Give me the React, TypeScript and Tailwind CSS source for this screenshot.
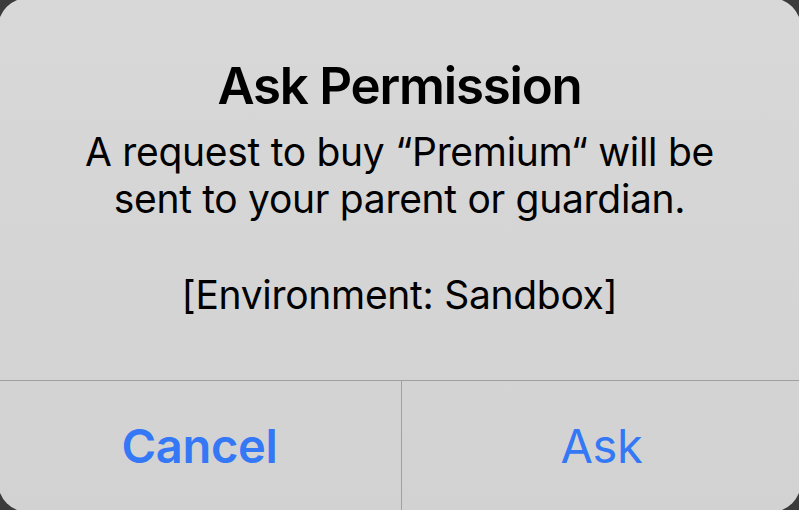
export default function App() {
  return (
    <div className="w-[799px] h-[510px] overflow-hidden bg-[#3b3b3b]" style={{ fontFamily: 'Inter, "Noto Sans", sans-serif' }}>
      <div className="-m-[2px] w-[803px] h-[514px] rounded-[30px] bg-gradient-to-b from-[#d8d8d8] to-[#d2d2d2] flex flex-col overflow-hidden">
        <div className="h-[382px] flex flex-col items-center pt-[60px] text-black">
          <div className="text-[51px] leading-[56px] font-semibold tracking-[-1.2px]">Ask Permission</div>
          <div className="mt-[14px] text-[39px] leading-[47px] text-center tracking-[-0.3px]">
            <div>A request to buy “Premium“ will be</div>
            <div>sent to your parent or guardian.</div>
            <div className="mt-[49px]">[Environment: Sandbox]</div>
          </div>
        </div>
        <div className="flex-1 flex border-t border-[#a0a0a0]">
          <div className="w-[404px] shrink-0 flex items-center justify-center text-[47px] font-semibold tracking-[-0.3px] text-[#3478f6] border-r border-[#a0a0a0]">Cancel</div>
          <div className="flex-1 flex items-center justify-center text-[47px] tracking-[-0.3px] text-[#3478f6]">Ask</div>
        </div>
      </div>
    </div>
  );
}
